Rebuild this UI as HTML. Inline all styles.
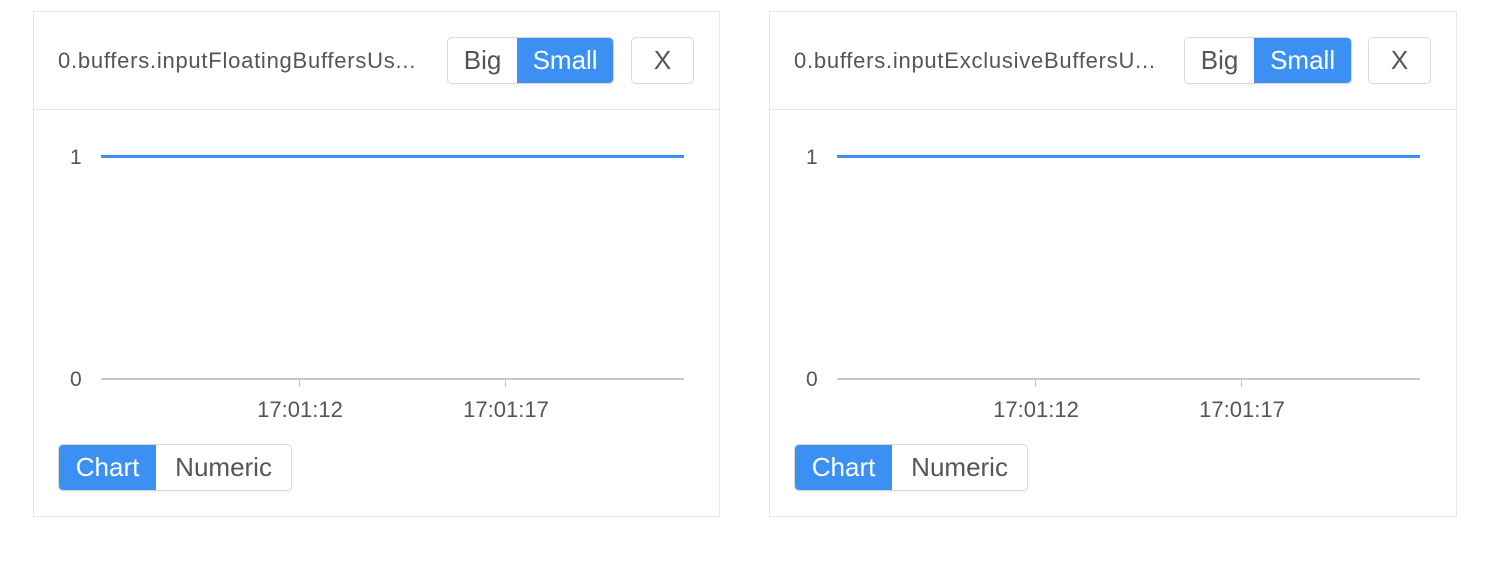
<!DOCTYPE html>
<html><head><meta charset="utf-8"><style>
body{margin:0;width:1506px;height:584px;background:#fff;font-family:"Liberation Sans",sans-serif;color:#555;position:relative;overflow:hidden}
.p{position:absolute;top:11px;width:687px;height:506px;border:1px solid #e6e6e6;box-sizing:border-box}
.a{position:absolute}
.hd{left:0;top:97px;width:100%;height:1px;background:#e6e6e6}
.t{left:24px;top:36px;font-size:22px;color:#555;white-space:nowrap;letter-spacing:0.75px}
.bg{top:25px;height:47px;border:1px solid #d9d9d9;border-radius:5px;box-sizing:border-box;overflow:hidden;display:flex;font-size:26px;box-shadow:0 2px 2px rgba(0,0,0,.04)}
.bg span{display:flex;align-items:center;justify-content:center;height:100%}
.on{background:#3d90f3;color:#fff}
.x{top:25px;width:63px;height:47px;border:1px solid #d9d9d9;border-radius:5px;box-sizing:border-box;font-size:26px;display:flex;align-items:center;justify-content:center;color:#555}
.l1{left:67px;top:143px;width:583px;height:3px;background:#3d90f3}
.ax{left:67px;top:366px;width:583px;height:2px;background:#c8c8c8}
.tk{top:367px;width:1px;height:8px;background:#c8c8c8}
.yl{font-size:21px;left:36px}
.xl{top:385px;font-size:22px;width:140px;text-align:center}
</style></head><body>
<div class="p" style="left:33px">
<div class="a t">0.buffers.inputFloatingBuffersUs...</div>
<div class="a bg" style="left:413px;width:167px"><span style="width:70px">Big</span><span class="on" style="width:97px">Small</span></div>
<div class="a x" style="left:597px">X</div>
<div class="a hd"></div>
<div class="a l1"></div>
<div class="a yl" style="top:134px">1</div>
<div class="a yl" style="top:356px">0</div>
<div class="a ax"></div>
<div class="a tk" style="left:265px"></div><div class="a tk" style="left:471px"></div>
<div class="a xl" style="left:196px">17:01:12</div><div class="a xl" style="left:402px">17:01:17</div>
<div class="a bg" style="left:24px;top:432px;width:234px"><span class="on" style="width:98px">Chart</span><span style="width:136px">Numeric</span></div>
</div>
<div class="p" style="left:769px;width:688px">
<div class="a t">0.buffers.inputExclusiveBuffersU...</div>
<div class="a bg" style="left:414px;width:168px"><span style="width:70px">Big</span><span class="on" style="width:98px">Small</span></div>
<div class="a x" style="left:598px">X</div>
<div class="a hd"></div>
<div class="a l1"></div>
<div class="a yl" style="top:134px">1</div>
<div class="a yl" style="top:356px">0</div>
<div class="a ax"></div>
<div class="a tk" style="left:265px"></div><div class="a tk" style="left:471px"></div>
<div class="a xl" style="left:196px">17:01:12</div><div class="a xl" style="left:402px">17:01:17</div>
<div class="a bg" style="left:24px;top:432px;width:234px"><span class="on" style="width:98px">Chart</span><span style="width:136px">Numeric</span></div>
</div>
</body></html>
